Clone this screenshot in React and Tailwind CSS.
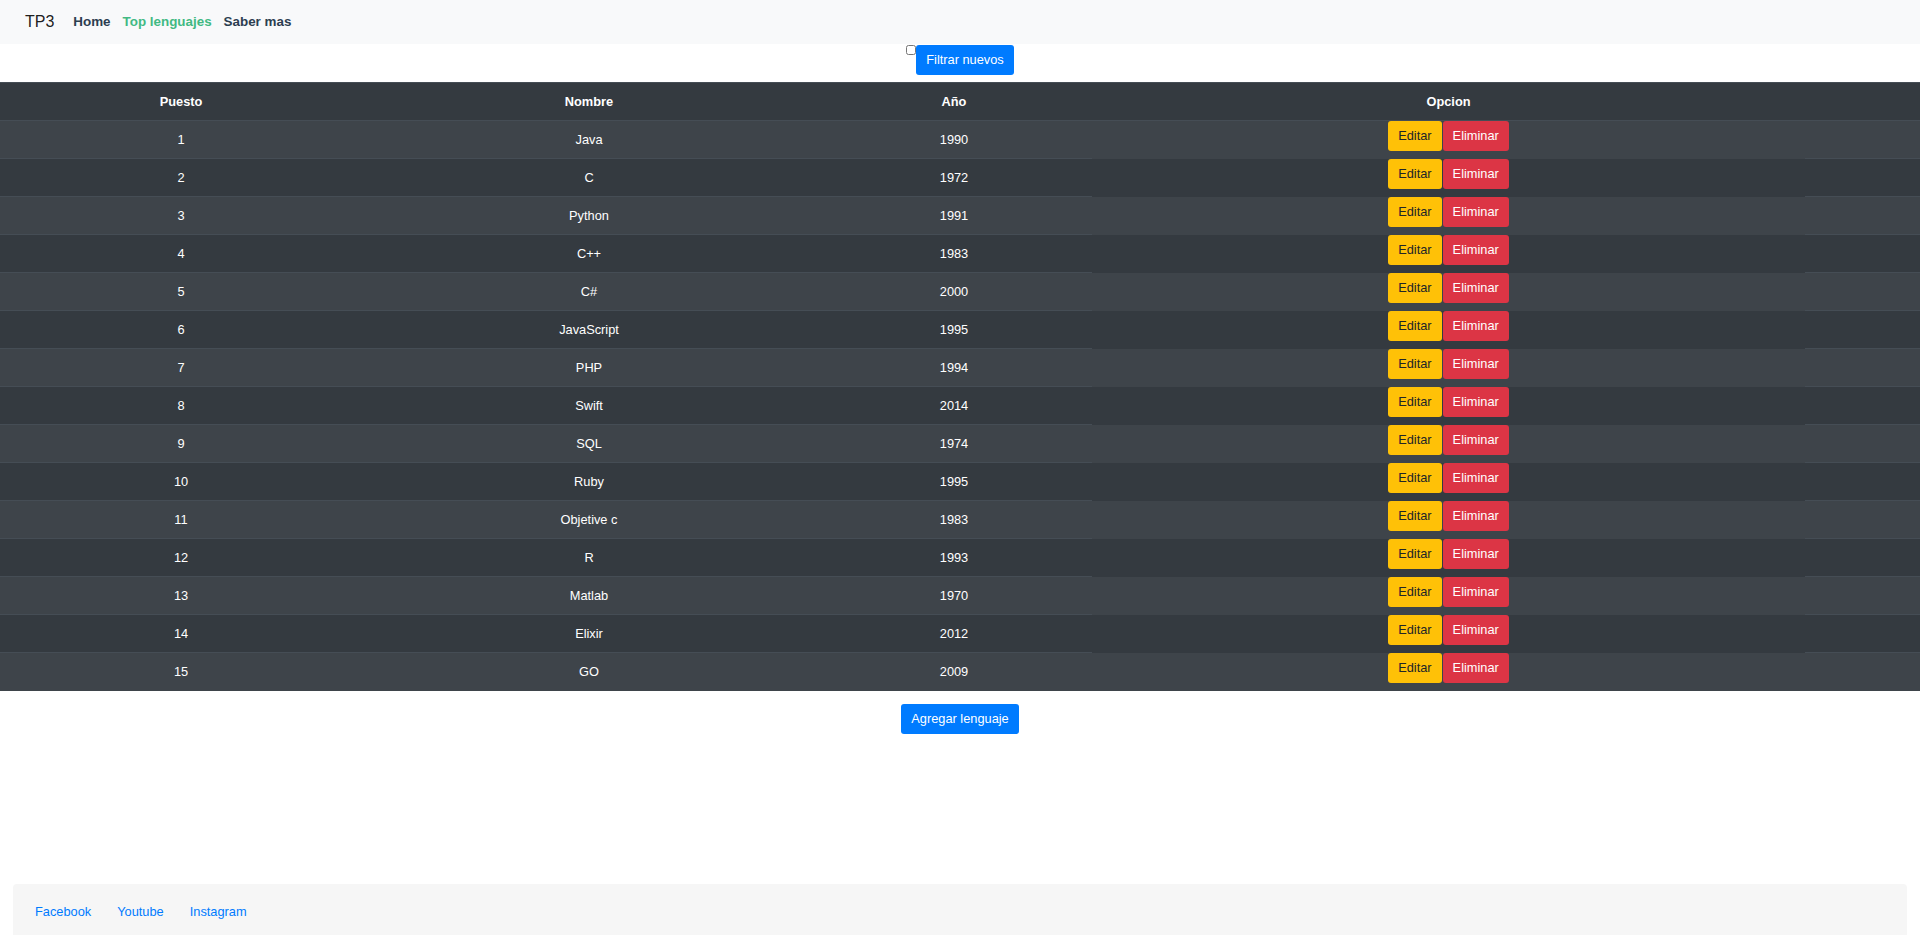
import { useState } from 'react'

const lenguajes = [
  { puesto: 1, nombre: 'Java', anio: 1990 },
  { puesto: 2, nombre: 'C', anio: 1972 },
  { puesto: 3, nombre: 'Python', anio: 1991 },
  { puesto: 4, nombre: 'C++', anio: 1983 },
  { puesto: 5, nombre: 'C#', anio: 2000 },
  { puesto: 6, nombre: 'JavaScript', anio: 1995 },
  { puesto: 7, nombre: 'PHP', anio: 1994 },
  { puesto: 8, nombre: 'Swift', anio: 2014 },
  { puesto: 9, nombre: 'SQL', anio: 1974 },
  { puesto: 10, nombre: 'Ruby', anio: 1995 },
  { puesto: 11, nombre: 'Objetive c', anio: 1983 },
  { puesto: 12, nombre: 'R', anio: 1993 },
  { puesto: 13, nombre: 'Matlab', anio: 1970 },
  { puesto: 14, nombre: 'Elixir', anio: 2012 },
  { puesto: 15, nombre: 'GO', anio: 2009 },
]

function Navbar() {
  return (
    <nav className="h-[44px] bg-[#f8f9fa] flex items-center pl-[25px]">
      <span className="text-[16px] text-black/90 mr-[19px]">TP3</span>
      <div className="flex gap-[12px] text-[13.4px] font-bold">
        <a href="#" className="text-[#2c3e50]">Home</a>
        <a href="#" className="text-[#42b983]">Top lenguajes</a>
        <a href="#" className="text-[#2c3e50]">Saber mas</a>
      </div>
    </nav>
  )
}

export default function App() {
  const [filtrar, setFiltrar] = useState(false)
  const rows = filtrar ? lenguajes.filter((l) => l.anio >= 1990) : lenguajes

  return (
    <div className="min-h-screen bg-white text-[#2c3e50] text-center font-['Liberation_Sans',Arial,sans-serif]">
      <Navbar />

      <div className="flex justify-center items-start mt-px mb-[7px]">
        <input
          type="checkbox"
          checked={filtrar}
          onChange={(e) => setFiltrar(e.target.checked)}
          className="w-[10px] h-[10px] m-0"
        />
        <button className="h-[30px] px-[10px] bg-[#007bff] text-white text-[12.8px] rounded-[3px]">
          Filtrar nuevos
        </button>
      </div>

      <table className="w-full table-fixed text-[12.8px] text-white bg-[#343a40]">
        <colgroup>
          <col className="w-[362px]" />
          <col className="w-[454px]" />
          <col className="w-[276px]" />
          <col className="w-[713px]" />
          <col />
        </colgroup>
        <thead>
          <tr className="h-[38px]">
            <th className="border-y border-[#454d55] font-bold">Puesto</th>
            <th className="border-y border-[#454d55] font-bold">Nombre</th>
            <th className="border-y border-[#454d55] font-bold">Año</th>
            <th className="border-y border-[#454d55] font-bold">Opcion</th>
            <th className="border-y border-[#454d55]"></th>
          </tr>
        </thead>
        <tbody>
          {rows.map((l, i) => (
            <tr key={l.puesto} className={i % 2 === 0 ? 'h-[38px] bg-[#3e444a]' : 'h-[38px]'}>
              <td className="border-t border-[#454d55]">{l.puesto}</td>
              <td className="border-t border-[#454d55]">{l.nombre}</td>
              <td className="border-t border-[#454d55]">{l.anio}</td>
              <td className="align-top p-0">
                <div className="flex justify-center">
                  <button className="h-[30px] px-[10px] bg-[#ffc107] text-[#212529] rounded-[3px]">
                    Editar
                  </button>
                  <button className="h-[30px] px-[10px] bg-[#dc3545] text-white rounded-[3px] ml-px">
                    Eliminar
                  </button>
                </div>
              </td>
              <td className="border-t border-[#454d55]"></td>
            </tr>
          ))}
        </tbody>
      </table>

      <div className="flex justify-center mt-[13px]">
        <button className="h-[30px] px-[10px] bg-[#007bff] text-white text-[12.8px] rounded-[3px]">
          Agregar lenguaje
        </button>
      </div>

      <footer className="mt-[150px] mx-[13px] bg-[#f6f6f6] rounded-[4px] py-[18px] pl-[22px] flex gap-[26px] text-[12.8px]">
        <a href="#" className="text-[#007bff]">Facebook</a>
        <a href="#" className="text-[#007bff]">Youtube</a>
        <a href="#" className="text-[#007bff]">Instagram</a>
      </footer>
    </div>
  )
}
